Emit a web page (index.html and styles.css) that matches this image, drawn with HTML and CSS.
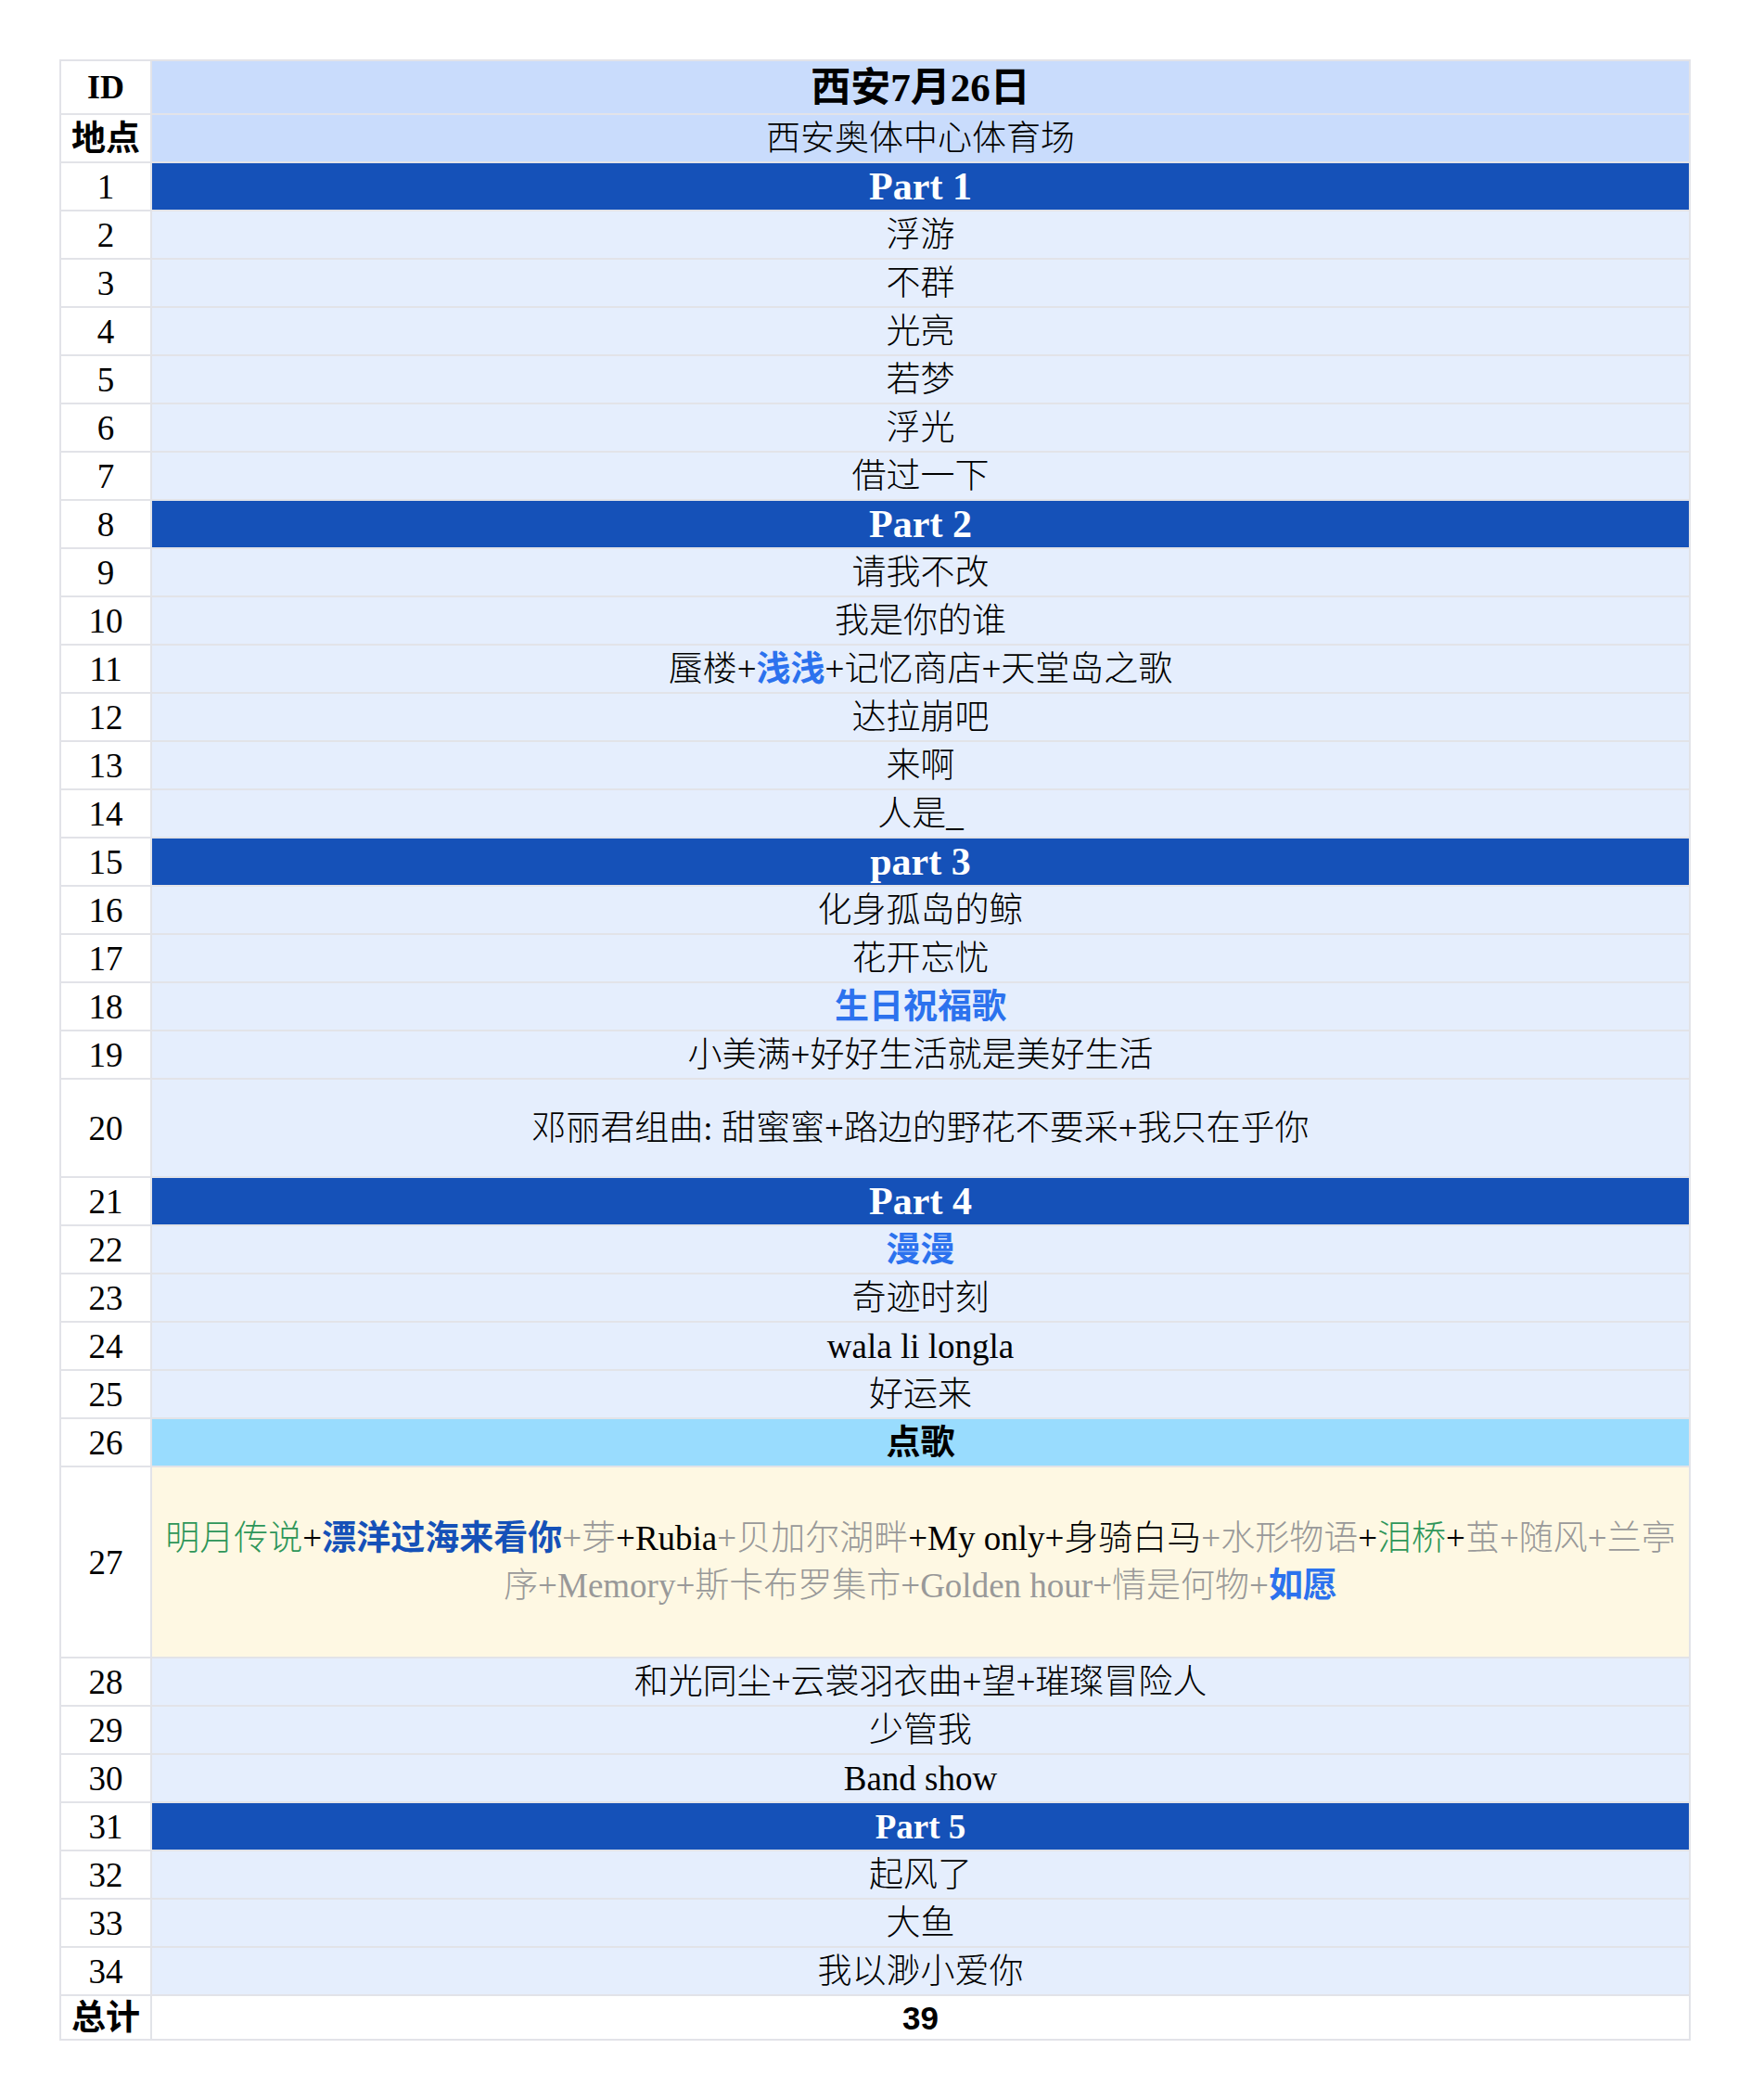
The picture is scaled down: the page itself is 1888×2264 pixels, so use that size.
FILE: index.html
```html
<!DOCTYPE html>
<html lang="zh-CN">
<head>
<meta charset="utf-8">
<title>西安7月26日</title>
<link rel="stylesheet" href="styles.css">
</head>
<body>
<div class="page">
  <div class="sheet">
    <div class="cell id r-head id-title">ID</div><div class="cell song head r-head title">西安7月26日</div>
    <div class="cell id id-cjk">地点</div><div class="cell song head">西安奥体中心体育场</div>

    <div class="cell id">1</div><div class="cell song part">Part 1</div>
    <div class="cell id">2</div><div class="cell song">浮游</div>
    <div class="cell id">3</div><div class="cell song">不群</div>
    <div class="cell id">4</div><div class="cell song">光亮</div>
    <div class="cell id">5</div><div class="cell song">若梦</div>
    <div class="cell id">6</div><div class="cell song">浮光</div>
    <div class="cell id">7</div><div class="cell song">借过一下</div>

    <div class="cell id">8</div><div class="cell song part">Part 2</div>
    <div class="cell id">9</div><div class="cell song">请我不改</div>
    <div class="cell id">10</div><div class="cell song">我是你的谁</div>
    <div class="cell id">11</div><div class="cell song">蜃楼+<span class="hl">浅浅</span>+记忆商店+天堂岛之歌</div>
    <div class="cell id">12</div><div class="cell song">达拉崩吧</div>
    <div class="cell id">13</div><div class="cell song">来啊</div>
    <div class="cell id">14</div><div class="cell song">人是_</div>

    <div class="cell id">15</div><div class="cell song part">part 3</div>
    <div class="cell id">16</div><div class="cell song">化身孤岛的鲸</div>
    <div class="cell id">17</div><div class="cell song">花开忘忧</div>
    <div class="cell id">18</div><div class="cell song"><span class="hl">生日祝福歌</span></div>
    <div class="cell id">19</div><div class="cell song">小美满+好好生活就是美好生活</div>
    <div class="cell id r-tall">20</div><div class="cell song r-tall">邓丽君组曲: 甜蜜蜜+路边的野花不要采+我只在乎你</div>

    <div class="cell id">21</div><div class="cell song part">Part 4</div>
    <div class="cell id">22</div><div class="cell song"><span class="hl">漫漫</span></div>
    <div class="cell id">23</div><div class="cell song">奇迹时刻</div>
    <div class="cell id">24</div><div class="cell song">wala li longla</div>
    <div class="cell id">25</div><div class="cell song">好运来</div>
    <div class="cell id">26</div><div class="cell song request-head">点歌</div>
    <div class="cell id r-req">27</div><div class="cell song request r-req"><p class="req-text"><span class="g">明月传说</span>+<span class="b">漂洋过海来看你</span><span class="m">+芽</span>+Rubia<span class="m">+贝加尔湖畔</span>+My only+身骑白马<span class="m">+水形物语</span>+<span class="g">泪桥</span>+<span class="m">茧+随风+兰亭<br>序+Memory+斯卡布罗集市+Golden hour+情是何物+</span><span class="hl">如愿</span></p></div>
    <div class="cell id">28</div><div class="cell song">和光同尘+云裳羽衣曲+望+璀璨冒险人</div>
    <div class="cell id">29</div><div class="cell song">少管我</div>
    <div class="cell id">30</div><div class="cell song">Band show</div>

    <div class="cell id">31</div><div class="cell song part part-small">Part 5</div>
    <div class="cell id">32</div><div class="cell song">起风了</div>
    <div class="cell id">33</div><div class="cell song">大鱼</div>
    <div class="cell id">34</div><div class="cell song">我以渺小爱你</div>
    <div class="cell id id-cjk r-total">总计</div><div class="cell song total r-total">39</div>
  </div>
</div>
</body>
</html>
```

FILE: styles.css
```css
html, body {
  margin: 0;
  padding: 0;
  background: #ffffff;
}

.page {
  padding: 64px 0 64px 64px;
}

.sheet {
  box-sizing: border-box;
  width: 1759px;
  display: grid;
  grid-template-columns: 96px 1fr;
  gap: 2px;
  padding: 2px;
  background: #e2e3e8;
  font-family: "Liberation Serif", "Noto Sans CJK SC", serif;
  font-size: 37px;
  font-weight: 300;
  color: #000000;
}

.cell {
  height: 50px;
  display: flex;
  align-items: center;
  justify-content: center;
  text-align: center;
  white-space: nowrap;
  line-height: 1;
}

.id {
  background: #ffffff;
  font-size: 37px;
}

.id-title {
  font-weight: 700;
  font-size: 36px;
}

.id-cjk {
  font-weight: 700;
  font-size: 37px;
}

.song {
  background: #e5eefd;
}

.head {
  background: #c9dcfc;
}

.title {
  font-weight: 700;
  font-size: 43px;
}

.part {
  background: #1551b8;
  color: #ffffff;
  font-weight: 700;
  font-size: 42px;
}

.part-small {
  font-size: 37px;
}

.request-head {
  background: #99dcfe;
  font-weight: 700;
}

.request {
  background: #fef8e3;
  white-space: normal;
}

.req-text {
  margin: 0;
  line-height: 51px;
}

.total {
  background: #ffffff;
  font-family: "Liberation Sans", "Noto Sans CJK SC", sans-serif;
  font-weight: 700;
  font-size: 35px;
}

.r-head { height: 56px; }
.r-tall { height: 104px; }
.r-req { height: 204px; }
.r-total { height: 46px; }

.hl {
  color: #2c72ee;
  font-weight: 700;
}

.b {
  color: #1551b8;
  font-weight: 700;
}

.g {
  color: #2e9659;
}

.m {
  color: #999999;
}
```
